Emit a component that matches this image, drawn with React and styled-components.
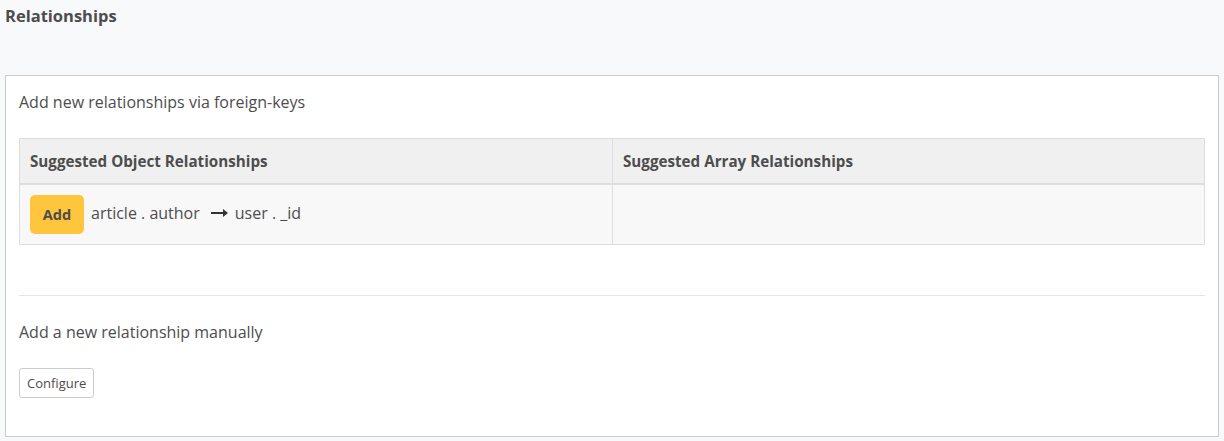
import styled, { createGlobalStyle } from "styled-components";

const GlobalStyle = createGlobalStyle`
	body {
		margin: 0;
		background: #f8f9fb;
		font-family: "Open Sans", "Noto Sans", sans-serif;
		color: #4d4d4d;
	}
`;

const Page = styled.div`
	padding: 0 5px;
`;

const Title = styled.h2`
	margin: 0;
	padding-top: 5px;
	height: 70px;
	font-size: 16.5px;
	font-weight: 700;
	line-height: 22px;
	color: #4d4d4d;
`;

const Card = styled.div`
	background: #fff;
	border: 1px solid #ccc;
	padding: 14px 13px 38px 13px;
`;

const Lead = styled.div`
	font-size: 16px;
	line-height: 24px;
	margin-bottom: ${({ $tight }) => ($tight ? "0" : "24px")};
`;

const Table = styled.div`
	display: grid;
	grid-template-columns: 1fr 1fr;
	border: 1px solid #ddd;
`;

const HeadCell = styled.div`
	background: #f0f0f0;
	border-bottom: 2px solid #ddd;
	border-left: ${({ $first }) => ($first ? "none" : "1px solid #ddd")};
	height: 44px;
	padding: 0 10px;
	display: flex;
	align-items: center;
	font-size: 15.2px;
	font-weight: 700;
`;

const Cell = styled.div`
	background: #f8f8f8;
	border-left: ${({ $first }) => ($first ? "none" : "1px solid #ddd")};
	height: 59px;
	padding: 0 10px;
	display: flex;
	align-items: center;
	gap: 7px;
	font-size: 16px;
`;

const Pair = styled.span`
	margin-bottom: 4px;
`;

const AddButton = styled.button`
	background: #fec53d;
	border: none;
	border-radius: 5px;
	width: 54px;
	height: 39px;
	font-family: inherit;
	font-size: 14.5px;
	font-weight: 700;
	color: #4d4d4d;
	cursor: pointer;
`;

const Arrow = styled.svg`
	margin: 0 7px 0 11px;
	vertical-align: 2px;
`;

const Divider = styled.hr`
	border: none;
	border-top: 1px solid #e6e6e6;
	margin: 50px 0 24px;
`;

const ConfigureButton = styled.button`
	margin-top: 24px;
	background: #fff;
	border: 1px solid #ccc;
	border-radius: 3px;
	padding: 5px 7px;
	font-family: inherit;
	font-size: 13px;
	color: #4d4d4d;
`;

export default function App() {
	return (
		<>
			<GlobalStyle />
			<Page>
				<Title>Relationships</Title>
				<Card>
					<Lead>Add new relationships via foreign-keys</Lead>
					<Table>
						<HeadCell $first>Suggested Object Relationships</HeadCell>
						<HeadCell>Suggested Array Relationships</HeadCell>
						<Cell $first>
							<AddButton>Add</AddButton>
							<Pair>
								article . author
								<Arrow width="17" height="8" viewBox="0 0 17 8">
									<path d="M0 4h14" stroke="#333" strokeWidth="2" />
									<path d="M12 0l5 4-5 4z" fill="#333" />
								</Arrow>
								user . _id
							</Pair>
						</Cell>
						<Cell />
					</Table>
					<Divider />
					<Lead $tight>Add a new relationship manually</Lead>
					<ConfigureButton>Configure</ConfigureButton>
				</Card>
			</Page>
		</>
	);
}
